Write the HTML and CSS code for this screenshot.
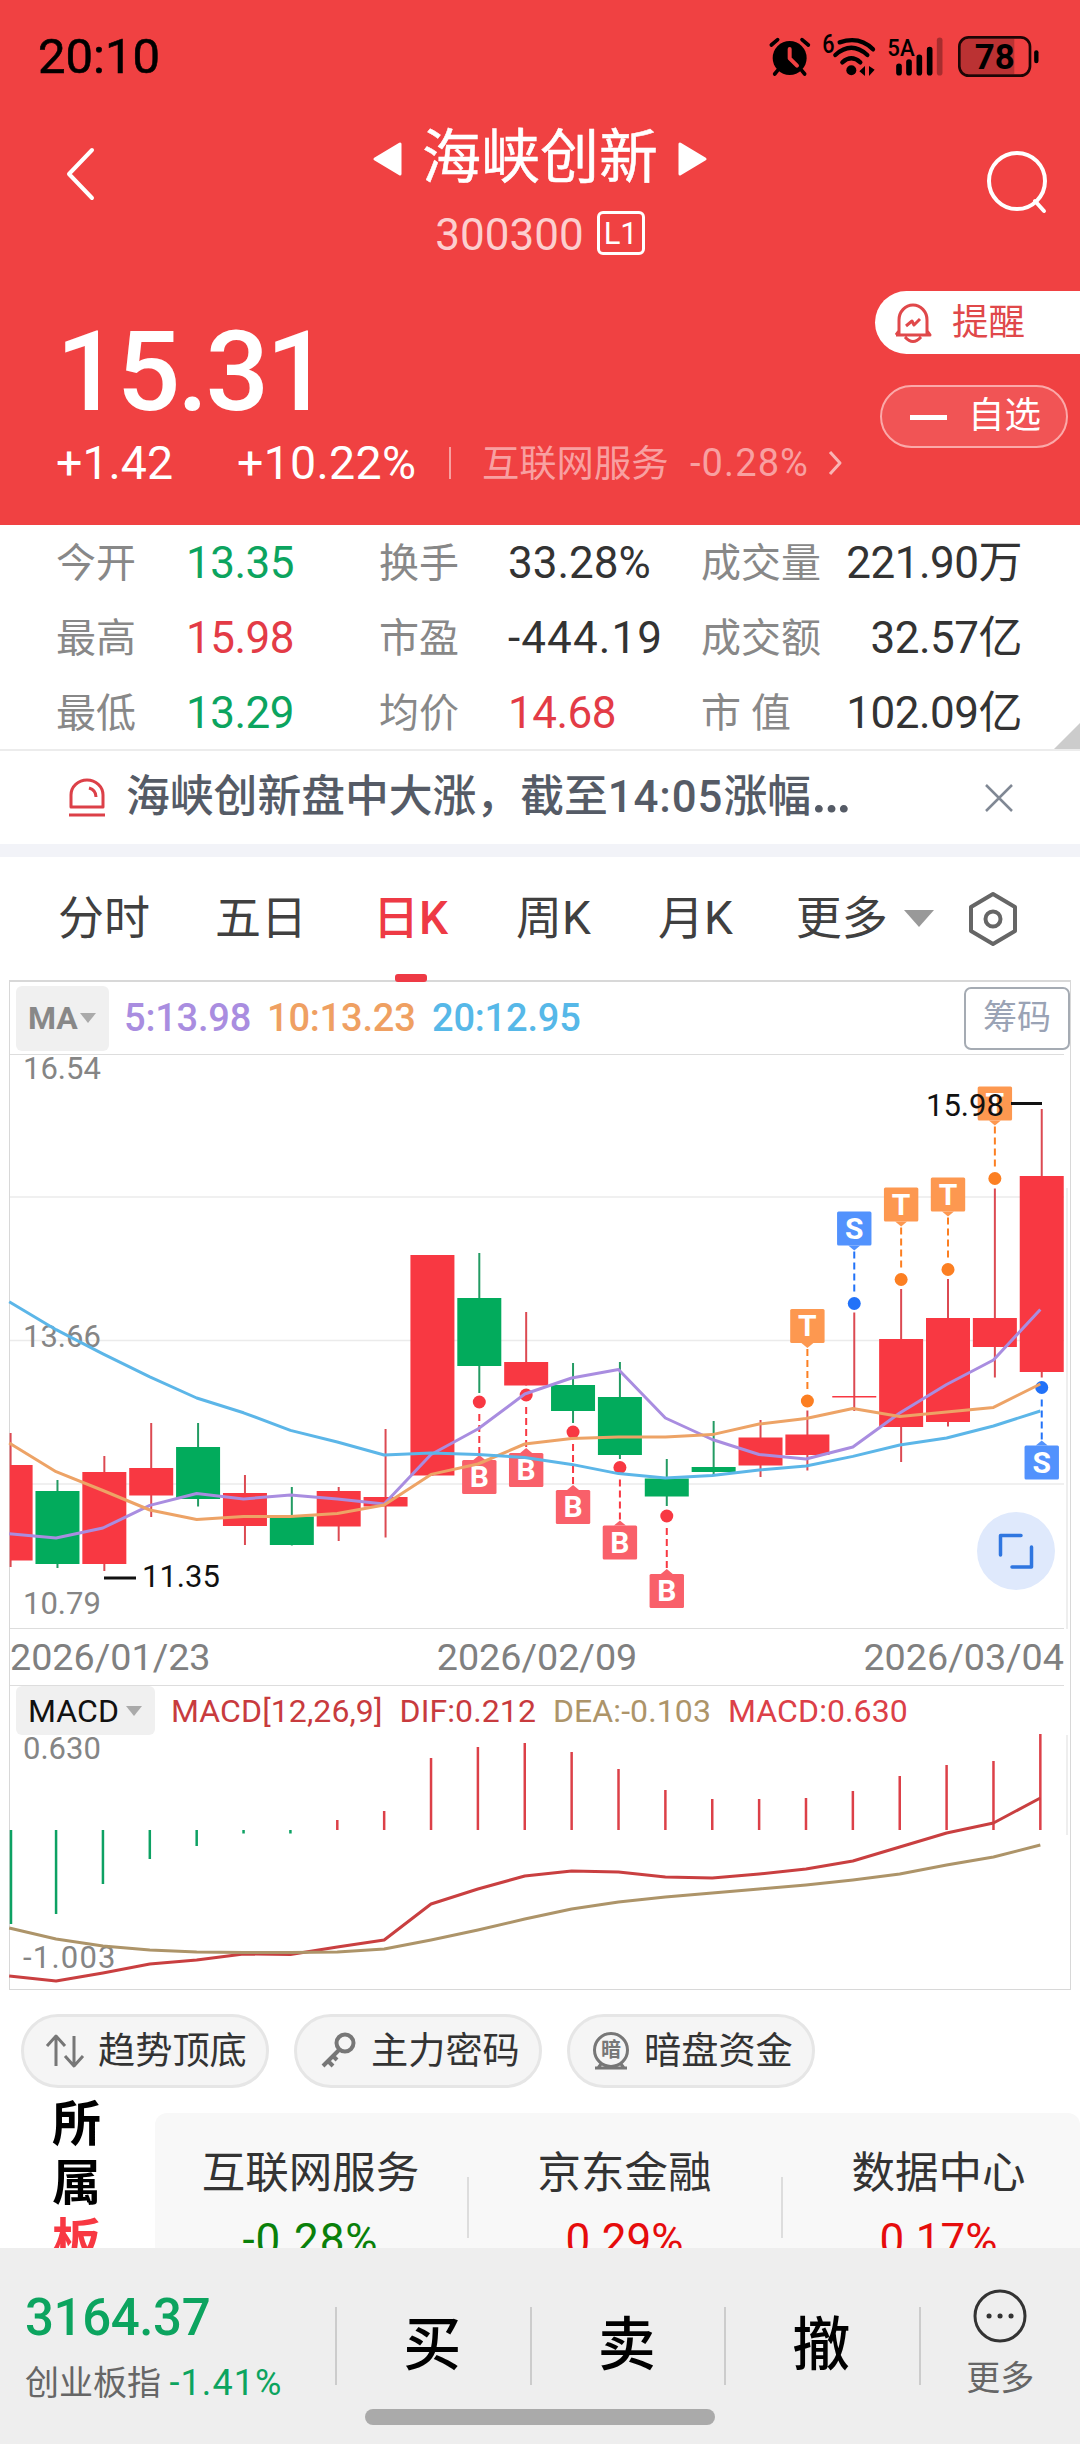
FILE: index.html
```html
<!DOCTYPE html>
<html lang="zh-CN">
	<head>
		<meta charset="UTF-8" />
		<meta name="viewport" content="width=device-width, initial-scale=1.0" />
		<title>海峡创新 300300</title>
		<link rel="stylesheet" href="styles.css">
	</head>
	<body>
		<header class="header">
			<div class="status-bar">
				<span class="status-time">20:10</span>
				<svg class="status-icons" viewBox="80 40 820 135">
					<!-- alarm -->
					<circle cx="148" cy="115" r="51" />
					<path class="st-line" d="M93 76l19-16M204 76l-19-16M112 152l-9 11M184 152l9 11" stroke-width="11" />
					<path d="M148 88v28l22 22" fill="none" stroke="#f04142" stroke-width="12" stroke-linecap="round" />
					<!-- wifi -->
					<text x="246" y="101" font-size="76" textLength="37" lengthAdjust="spacingAndGlyphs">6</text>
					<path class="st-line" d="M298 68q60-20 100 21M285 106q48-43 96 0M306 128q27-24 54 0" stroke-width="13" />
					<circle cx="333" cy="152" r="15" />
					<path d="M374 139v30l-17-14zM386 139v30l17-19z" />
					<!-- signal -->
					<text x="441" y="108" font-size="74" textLength="82" lengthAdjust="spacingAndGlyphs">5A</text>
					<path class="st-line" d="M476 140v19M506 127v32M537 113v46M568 90v69" stroke-width="17" />
					<path class="st-line" d="M598 62v97" stroke-width="17" opacity="0.3" />
					<!-- battery -->
					<path d="M680 58h142v105H680q-20 0-20-20V78q0-20 20-20z" opacity="0.22" />
					<rect x="657" y="53" width="212" height="115" rx="28" fill="none" stroke="#1d0505" stroke-width="8" />
					<path class="st-line" d="M888 98v26" stroke-width="13" />
					<text x="703" y="149" font-size="104" font-weight="700" textLength="120" lengthAdjust="spacingAndGlyphs">78</text>
				</svg>
			</div>
			<div class="nav">
				<svg class="back" viewBox="0 0 30 54"><path d="M27 3L4 27l23 24" /></svg>
				<div class="title">
					<div class="title-name">
						<svg viewBox="0 0 30 34"><path d="M28 2v30L3 17z" /></svg>
						<span>海峡创新</span>
						<svg viewBox="0 0 30 34"><path d="M2 2v30l25-15z" /></svg>
					</div>
					<div class="title-code">300300<span class="level">L1</span></div>
				</div>
				<svg class="search" viewBox="0 0 64 66"><circle cx="32" cy="31" r="28" /><path d="M50 51l9 10" /></svg>
			</div>
			<div class="quote">
				<div class="price">15.31</div>
				<div class="change">
					<span class="change-value">+1.42</span>
					<span class="change-percent">+10.22%</span>
					<span class="change-line"></span>
					<span class="sector">互联网服务</span>
					<span class="sector-percent">-0.28%</span>
					<svg viewBox="0 0 16 28"><path d="M3 3l10 11L3 25" /></svg>
				</div>
				<div class="pill remind">
					<svg viewBox="0 0 40 42"><path d="M6 32V18a14 15 0 0 1 28 0v14M3 33h34l-3-4M3 33l3-4M12 35q8 9 16 0M13 24l6-5 2 4 6-6" /></svg>
					提醒
				</div>
				<div class="pill favor"><i></i><span>自选</span></div>
			</div>
		</header>

		<section class="stats">
			<span class="label">今开</span><b class="green">13.35</b>
			<span class="label">换手</span><b class="percent">33.28%</b>
			<span class="label">成交量</span><b class="right">221.90万</b>
			<span class="label">最高</span><b class="red">15.98</b>
			<span class="label">市盈</span><b class="wide">-444.19</b>
			<span class="label">成交额</span><b class="right">32.57亿</b>
			<span class="label">最低</span><b class="green">13.29</b>
			<span class="label">均价</span><b class="red">14.68</b>
			<span class="label">市 值</span><b class="right">102.09亿</b>
		</section>

		<section class="alert">
			<svg class="alert-icon" viewBox="0 0 38 40"><path d="M3 29V17a16 15 0 0 1 32 0v12zM1 37h36M21 10q7 2 7 9" /></svg>
			<span class="alert-text">海峡创新盘中大涨，截至<span class="alert-time">14:05</span>涨幅<span class="dots">…</span></span>
			<svg class="alert-close" viewBox="0 0 30 30"><path d="M2 2l26 26M28 2L2 28" /></svg>
		</section>

		<nav class="tabs">
			<span>分时</span>
			<span>五日</span>
			<span class="active">日K</span>
			<span>周K</span>
			<span>月K</span>
			<span>更多</span>
			<i class="caret"></i>
			<svg viewBox="0 0 52 56"><path d="M26 3l22 13v24L26 53 4 40V16z" /><circle cx="26" cy="28" r="7.5" /></svg>
		</nav>

		<main class="chart">
			<div class="ma-row">
				<span class="chart-button ma-button">MA<i class="caret"></i></span>
				<span class="ma5">5:13.98</span>
				<span class="ma10">10:13.23</span>
				<span class="ma20">20:12.95</span>
				<span class="chip">筹码</span>
			</div>
			<svg id="kline" class="kline" viewBox="10 1054 1061 575"></svg>
			<div class="dates">
				<span>2026/01/23</span><span>2026/02/09</span><span>2026/03/04</span>
			</div>
			<div class="macd-row">
				<span class="chart-button macd-button">MACD<i class="caret"></i></span>
				<span class="dif">MACD[12,26,9]</span>
				<span class="dif">DIF:0.212</span>
				<span class="dea">DEA:-0.103</span>
				<span class="macd">MACD:0.630</span>
			</div>
			<svg id="macd" class="macd-chart" viewBox="10 1735 1061 255"></svg>
		</main>

		<section class="tools">
			<span class="tool">
				<svg viewBox="0 0 40 40"><path d="M11 35V6M2 15l9-10 9 10M29 5v29M20 25l9 10 9-10" /></svg>趋势顶底
			</span>
			<span class="tool">
				<svg class="key" viewBox="0 0 40 40"><circle cx="27" cy="12" r="8.5" /><path d="M21 19L5 35M10 30l5 5M15 25l4 4" /></svg>主力密码
			</span>
			<span class="tool">
				<svg viewBox="0 0 40 40"><circle cx="20" cy="19" r="16.5" /><path d="M4 37h32M10 33l-3 4M30 33l3 4" /><text x="10" y="26">暗</text></svg>暗盘资金
			</span>
		</section>

		<section class="boards">
			<div class="boards-title">所<br>属<br><span>板</span></div>
			<div class="boards-list">
				<div class="board"><span>互联网服务</span><em class="down">-0.28%</em></div>
				<div class="board"><span>京东金融</span><em>0.29%</em></div>
				<div class="board"><span>数据中心</span><em>0.17%</em></div>
			</div>
		</section>

		<footer class="footer">
			<div class="index">
				<div class="index-value">3164.37</div>
				<div class="index-name">创业板指 <span>-1.41%</span></div>
			</div>
			<div class="trade">买</div>
			<div class="trade">卖</div>
			<div class="trade">撤</div>
			<div class="more">
				<svg viewBox="0 0 56 56"><circle cx="28" cy="28" r="25" /><path d="M17 28h.1M28 28h.1M39 28h.1" /></svg>
				更多
			</div>
			<div class="home-bar"></div>
		</footer>

		<script>
			const RED = "#f83842";
			const GREEN = "#02ab5c";
			const STEP = 46.87;
			const kline = document.querySelector("#kline");
			const macd = document.querySelector("#macd");

			// body top, body bottom, high, low, up(1) / down(0)
			const candles = [
				[1465, 1560.5, 1433, 1567, 1], [1491, 1564, 1480, 1568, 0],
				[1472, 1564, 1456, 1571, 1], [1468, 1495.5, 1423, 1517, 1],
				[1447, 1499, 1423, 1506.5, 0], [1493, 1526, 1475, 1545, 1],
				[1516.5, 1545, 1487, 1545.5, 0], [1491, 1526.5, 1487, 1541, 1],
				[1497, 1506.5, 1429, 1537.5, 1], [1255, 1475.5, 1255, 1475.5, 1],
				[1298, 1366, 1253, 1393, 0], [1362, 1385.5, 1312, 1385.5, 1],
				[1385, 1411, 1363, 1423, 0], [1397, 1455, 1362, 1459, 0],
				[1478.5, 1496.5, 1459, 1506, 0], [1467, 1472, 1421, 1474.5, 0],
				[1437.5, 1465.5, 1420, 1477, 1], [1434.5, 1455, 1410.5, 1470.5, 1],
				[1396, 1397.5, 1312.5, 1411, 1], [1339, 1427, 1289, 1462, 1],
				[1318, 1422, 1279, 1426.5, 1], [1318, 1347, 1188.5, 1377.5, 1],
				[1176, 1372, 1109, 1377.5, 1],
			];
			const ma5 = [1533.7, 1538, 1528, 1505.4, 1493.5, 1499, 1495, 1499, 1504, 1454.5, 1429, 1394, 1378, 1369.5, 1418, 1439.5, 1454.5, 1459, 1447, 1413, 1384.5, 1360, 1309.5];
			const ma10 = [1443, 1471.7, 1490.5, 1510, 1519.5, 1516.5, 1516.5, 1513.4, 1505, 1474.4, 1464, 1444, 1438.4, 1437, 1437, 1434.6, 1424, 1418.5, 1408.5, 1416.6, 1412, 1407.4, 1384];
			const ma20 = [1301.8, 1329.7, 1353.8, 1376.8, 1398, 1412.8, 1430.4, 1442, 1455, 1453, 1454.5, 1457.5, 1464.4, 1473.6, 1478, 1475.5, 1470, 1466, 1456.4, 1445, 1438, 1426, 1411];
			// candle, letter, dot y, badge side
			const signals = [
				[10, "B", 1402, 1], [11, "B", 1395, 1], [12, "B", 1432, 1],
				[13, "B", 1467.5, 1], [14, "B", 1516, 1], [17, "T", 1401, -1],
				[18, "S", 1303.5, -1], [19, "T", 1279.5, -1], [20, "T", 1269.5, -1],
				[21, "T", 1178.5, -1], [22, "S", 1387.5, 1],
			];
			const signalColors = {
				B: ["#f83842", "#f9606a"],
				T: ["#fc7f22", "#fd9850"],
				S: ["#2272f8", "#5292fd"],
			};
			const bars = [1924, 1914, 1884, 1859, 1846, 1833.5, 1833.5, 1820, 1811, 1758, 1747, 1743, 1752, 1769, 1790, 1799, 1799, 1798, 1791, 1776, 1765, 1761, 1734];
			const dif = [1976, 1981, 1973, 1964, 1960, 1954, 1954.5, 1947, 1940, 1904, 1889, 1876, 1871, 1872, 1877, 1878, 1874, 1869, 1861, 1847, 1833, 1823, 1798];
			const dea = [1928, 1939, 1946, 1950, 1952, 1952.5, 1952.5, 1952, 1949, 1940, 1930, 1919, 1909, 1902, 1897, 1893, 1889, 1885, 1880, 1874, 1865, 1857, 1845];

			function line(values, color, start) {
				const points = values.map((y, i) => `${start + i * STEP},${y}`).join(" ");
				return `<polyline points="${points}" fill="none" stroke="${color}" stroke-width="3" stroke-linejoin="round" />`;
			}

			function renderKline() {
				let html = "";
				[1197, 1340.5, 1484].forEach((y) => {
					html += `<path d="M10 ${y}H1064" stroke="#ebebeb" stroke-width="1.5" />`;
				});
				html += `<path d="M10 1054.5H1064M10 1628.5H1064" stroke="#ddd" />`;
				html += `<path d="M1067 1188V1629" stroke="#eee" stroke-width="2" />`;
				[["16.54", 1079], ["13.66", 1346.5], ["10.79", 1614]].forEach(([text, y]) => {
					html += `<text class="axis" x="23" y="${y}">${text}</text>`;
				});
				candles.forEach(([top, bottom, high, low, up], i) => {
					const x = 10.6 + i * STEP;
					const left = Math.max(10, x - 22);
					const color = up ? RED : GREEN;
					html += `<path d="M${x} ${high}V${low}" stroke="${up ? "#dc4a52" : "#239b63"}" stroke-width="2" />`;
					html += `<rect x="${left}" y="${top}" width="${x + 22 - left}" height="${bottom - top}" fill="${color}" />`;
				});
				signals.forEach(([i, letter, y, side]) => {
					const x = 10.6 + i * STEP;
					const [dot, badge] = signalColors[letter];
					const top = side > 0 ? y + 58 : y - 92;
					const edge = side > 0 ? top : top + 34;
					html += `<path d="M${x} ${y + side * 12}V${edge - side * 6}" stroke="${dot}" stroke-width="2" stroke-dasharray="7 4" />`;
					html += `<circle cx="${x}" cy="${y}" r="6.5" fill="${dot}" />`;
					html += `<rect x="${x - 17.2}" y="${top}" width="34.4" height="34" rx="1.5" fill="${badge}" />`;
					html += `<path d="M${x - 6} ${edge}l6 ${-side * 5}l6 ${side * 5}z" fill="${badge}" />`;
					html += `<text class="signal" x="${x}" y="${top + 27}">${letter}</text>`;
				});
				html += line(ma5, "#a98de0", 9.2);
				html += line(ma10, "#eda366", 9.2);
				html += line(ma20, "#5cb6e8", 9.2);
				html += `<path d="M104 1578H136M1011 1103.5H1042" stroke="#111" stroke-width="3" />`;
				html += `<text class="mark" x="142" y="1587">11.35</text>`;
				html += `<text class="mark" x="926" y="1116">15.98</text>`;
				html += `<circle cx="1016" cy="1551" r="39" fill="#dfe9fc" />`;
				html += `<path d="M1021 1535.5H1000.5V1555M1031.5 1547V1567H1012" fill="none" stroke="#2f76e0" stroke-width="3.5" stroke-linecap="round" />`;
				kline.innerHTML = html;
			}

			function renderMacd() {
				let html = `<path d="M1067 1735V1835" stroke="#eee" stroke-width="2" />`;
				html += `<text class="axis" x="23" y="1759">0.630</text>`;
				html += `<text class="axis low" x="23" y="1968">-1.003</text>`;
				bars.forEach((y, i) => {
					const x = i === 0 ? 11 : 9.2 + i * STEP;
					html += `<path d="M${x} 1830V${y}" stroke="${y > 1830 ? "#0da163" : "#dc4048"}" stroke-width="2.5" />`;
				});
				html += line(dif, "#c93f40", 9.2);
				html += line(dea, "#ad9469", 9.2);
				macd.innerHTML = html;
			}

			renderKline();
			renderMacd();
		</script>
	</body>
</html>
```
FILE: styles.css
```css
* {
	padding: 0;
	margin: 0;
	box-sizing: border-box;
}
body {
	width: 1080px;
	height: 2444px;
	overflow: hidden;
	position: relative;
	background: #fff;
	color: #333;
	font-family: Roboto, "Noto Sans CJK SC", sans-serif;
}
svg {
	display: block;
	flex: none;
	overflow: visible;
}
svg path,
svg circle {
	stroke-linejoin: round;
}
i,
em {
	font-style: normal;
}
.green {
	color: #0ca45f;
}
.red {
	color: #e33b46;
}

/* header */
.header {
	height: 525px;
	background: #f04142;
	color: #fff;
}
.status-bar {
	height: 112px;
	display: flex;
	justify-content: space-between;
	padding: 33px 40px 0 38px;
	color: #000;
}
.status-time {
	font-size: 49px;
	line-height: 48px;
	font-weight: 400;
	-webkit-text-stroke: 0.6px #000;
}
.status-icons {
	width: 273.33px;
	height: 45px;
	font-weight: 500;
}
.st-line {
	fill: none;
	stroke: #000;
	stroke-linecap: round;
}
.nav {
	height: 168px;
	display: flex;
	justify-content: space-between;
	padding: 0 31px 0 65px;
}
.nav .back,
.nav .search {
	fill: none;
	stroke: #fff;
	stroke-width: 4;
	stroke-linecap: round;
}
.back {
	width: 30px;
	height: 54px;
	margin-top: 35px;
}
.search {
	width: 64px;
	height: 66px;
	margin-top: 38px;
}
.title {
	width: 360px;
}
.title-name {
	height: 88px;
	display: flex;
	justify-content: center;
	align-items: center;
	gap: 20px;
	padding-top: 4px;
	font-size: 59px;
	line-height: 88px;
	font-weight: 400;
	-webkit-text-stroke: 0.5px #fff;
}
.title-name svg {
	width: 30px;
	height: 34px;
	margin-top: 1px;
	fill: #fff;
	stroke: #fff;
	stroke-width: 3;
}
.title-code {
	display: flex;
	justify-content: center;
	align-items: center;
	gap: 13px;
	height: 69px;
	color: #fccfcf;
	font-size: 44px;
}
.level {
	width: 48px;
	height: 44px;
	margin-top: -4px;
	border: 3px solid #fff;
	border-radius: 6px;
	color: #fff;
	font-size: 31px;
	line-height: 40px;
	text-align: center;
}
.quote {
	position: relative;
	padding-left: 56px;
}
.price {
	height: 155px;
	padding: 25px 0 0 0;
	font-size: 112px;
	line-height: 134px;
	font-weight: 500;
	letter-spacing: -3px;
}
.change {
	height: 56px;
	display: flex;
	align-items: center;
	font-size: 46.5px;
	line-height: 56px;
}
.change-value {
	width: 181px;
}
.change-percent {
	width: 212px;
	letter-spacing: 0.3px;
}
.change-line {
	width: 2px;
	height: 32px;
	background: #f7a0a0;
}
.sector {
	width: 208px;
	margin-left: 31px;
	padding-top: 2px;
	color: #f8a0a1;
	font-size: 37.3px;
}
.sector-percent {
	width: 137px;
	color: #f8a0a1;
	font-size: 38px;
	letter-spacing: 1.1px;
}
.change svg {
	width: 16px;
	height: 28px;
	fill: none;
	stroke: #f9b4b4;
	stroke-width: 3;
}
.pill {
	position: absolute;
	height: 63px;
	display: flex;
	align-items: center;
	font-size: 36.5px;
	line-height: 54px;
}
.remind {
	top: 11px;
	right: 0;
	width: 205px;
	padding-left: 18px;
	gap: 19px;
	border-radius: 32px 0 0 32px;
	background: #fff;
	color: #e0484a;
}
.remind svg {
	width: 40px;
	height: 42px;
	fill: none;
	stroke: #e0484a;
	stroke-width: 3;
}
.favor {
	top: 105px;
	right: 12px;
	width: 188px;
	padding-left: 28px;
	gap: 21px;
	border: 2px solid #fba9a9;
	border-radius: 32px;
	background: #f15455;
}
.favor span {
	margin-top: -2px;
}
.favor i {
	width: 37px;
	height: 5px;
	margin-top: 2px;
	background: #fff;
}

/* stats */
.stats {
	position: relative;
	height: 226px;
	display: grid;
	grid-template-columns: 130px 193px 129px 193px 130px 191px;
	grid-auto-rows: 75px;
	padding-left: 56px;
	border-bottom: 2px solid #ececec;
	line-height: 77px;
}
.stats .label {
	color: #888;
	font-size: 40px;
}
.stats b {
	font-size: 44px;
	font-weight: 400;
	letter-spacing: -0.5px;
	white-space: nowrap;
}
.stats .percent {
	letter-spacing: 0;
}
.stats .wide {
	letter-spacing: 1.1px;
}
.stats .right {
	justify-self: end;
}
.stats::after {
	content: "";
	position: absolute;
	right: 0;
	bottom: 0;
	border-left: 26px solid transparent;
	border-bottom: 26px solid #ccc;
}

/* alert */
.alert {
	height: 106px;
	display: flex;
	align-items: center;
	padding: 0 66px 0 68px;
	border-bottom: 13px solid #f2f3f8;
}
.alert-icon {
	width: 38px;
	height: 40px;
	margin-right: 20px;
	fill: none;
	stroke: #dc4048;
	stroke-width: 3;
}
.alert-text {
	flex: 1;
	height: 93px;
	color: #555b66;
	font-size: 43.8px;
	font-weight: 500;
	line-height: 93px;
}
.alert-time {
	letter-spacing: 0.9px;
}
.dots {
	font-size: 57px;
	line-height: 1;
}
.alert-close {
	width: 30px;
	height: 30px;
	fill: none;
	stroke: #808894;
	stroke-width: 2.5;
}

/* tabs */
.tabs {
	height: 123px;
	display: flex;
	align-items: center;
	padding-left: 58px;
	color: #404040;
	font-size: 46px;
}
.tabs span {
	position: relative;
	line-height: 123px;
	margin-right: 67px;
}
.tabs span:nth-of-type(1) {
	margin-right: 65px;
}
.tabs span:nth-of-type(2) {
	margin-right: 66px;
}
.tabs span:nth-of-type(3) {
	margin-right: 68px;
}
.tabs span:nth-of-type(5) {
	margin-right: 63px;
}
.tabs span:nth-of-type(6) {
	margin-right: 16px;
}
.tabs .active {
	color: #ee3a45;
	font-weight: 500;
}
.tabs .active::after {
	content: "";
	position: absolute;
	left: 22px;
	bottom: -2px;
	width: 32px;
	height: 8px;
	border-radius: 3px;
	background: #ee3a45;
}
.caret {
	border: 8px solid transparent;
	border-top: 10px solid #aaa;
	border-bottom: 0;
}
.tabs .caret {
	border-width: 17px 15px 0;
	border-top-color: #999;
	margin-right: 33px;
}
.tabs svg {
	width: 52px;
	height: 56px;
	fill: none;
	stroke: #666;
	stroke-width: 4;
}

/* charts */
.chart {
	width: 1062px;
	height: 1010px;
	margin-left: 9px;
	border: 1px solid #d8d8d8;
	border-top-width: 2px;
}
.ma-row {
	height: 72px;
	display: flex;
	align-items: center;
	padding: 0 0 0 6px;
	font-size: 38px;
	font-weight: 500;
}
.chart-button {
	display: flex;
	align-items: center;
	justify-content: space-between;
	padding: 0 13px 0 12px;
	border-radius: 6px;
	background: #f0f0f0;
}
.ma-button {
	width: 93px;
	height: 65px;
	margin-right: 15px;
	color: #888;
	font-size: 32px;
	font-weight: 700;
}
.ma5 {
	width: 143px;
	color: #a98de0;
	letter-spacing: -0.2px;
}
.ma10 {
	width: 165px;
	color: #efa062;
	letter-spacing: -0.2px;
}
.ma20 {
	flex: 1;
	color: #56b8e8;
	letter-spacing: -0.2px;
}
.chip {
	width: 106px;
	height: 63px;
	border: 2px solid #a5abb3;
	border-radius: 7px;
	color: #9aa3b5;
	font-size: 34px;
	font-weight: 400;
	line-height: 56px;
	text-align: center;
}
.kline {
	width: 1061px;
	height: 575px;
}
.axis {
	fill: #858585;
	font-size: 31px;
}
.axis.low {
	letter-spacing: 1.2px;
}
.mark {
	fill: #111;
	font-size: 31px;
}
.signal {
	fill: #fff;
	font-size: 30px;
	font-weight: 700;
	text-anchor: middle;
}
.dates {
	width: 1054px;
	height: 57px;
	display: flex;
	justify-content: space-between;
	align-items: center;
	border-bottom: 1px solid #ddd;
	color: #808080;
	font-size: 37.7px;
}
.macd-row {
	height: 49px;
	display: flex;
	align-items: center;
	padding-left: 6px;
	font-size: 32px;
	letter-spacing: 0.1px;
}
.macd-row > span + span {
	margin-right: 17px;
}
.macd-button {
	width: 139px;
	height: 49px;
	margin-right: 16px;
	color: #111;
	font-size: 32px;
	font-weight: 400;
}
.dif {
	color: #c83b3e;
}
.dea {
	color: #ad9469;
}
.macd {
	color: #dc4048;
}
.macd-chart {
	width: 1061px;
	height: 255px;
}

/* tools */
.tools {
	display: flex;
	gap: 25px;
	padding: 24px 0 0 21px;
}
.tool {
	width: 248px;
	height: 74px;
	display: flex;
	align-items: center;
	gap: 13px;
	padding-left: 21px;
	border: 3px solid #e6e6e6;
	border-radius: 37px;
	background: #f5f5f5;
	font-size: 37.2px;
	line-height: 64px;
	white-space: nowrap;
}
.tool svg {
	width: 40px;
	height: 40px;
	fill: none;
	stroke: #777;
	stroke-width: 3;
}
.tool .key {
	stroke-width: 4;
}
.tool text {
	fill: #777;
	stroke: none;
	font-size: 20px;
	font-weight: 700;
}

/* boards */
.boards {
	display: flex;
	padding-top: 6px;
}
.boards-title {
	width: 155px;
	padding: 1px 0 0 52px;
	color: #000;
	font-size: 49px;
	font-weight: 700;
	line-height: 59px;
}
.boards-title span {
	color: #f83842;
}
.boards-list {
	width: 925px;
	height: 180px;
	margin-top: 19px;
	display: flex;
	border-radius: 12px;
	background: #f8f8f8;
	overflow: hidden;
}
.board {
	position: relative;
	flex: none;
	width: 314px;
	padding: 31px 3px 0 0;
	text-align: center;
	font-size: 43.5px;
	line-height: 60px;
}
.board + .board::before {
	content: "";
	position: absolute;
	left: -2px;
	top: 64px;
	width: 2px;
	height: 61px;
	background: #ddd;
}
.board em {
	display: block;
	margin-top: 6px;
	color: #e60c0c;
	font-size: 44px;
}
.board .down {
	color: #0a800a;
	letter-spacing: 1px;
}

/* footer */
.footer {
	position: absolute;
	left: 0;
	bottom: 0;
	width: 1080px;
	height: 196px;
	display: flex;
	background: #eee;
}
.index {
	width: 335px;
	padding: 41px 0 0 25px;
}
.index-value {
	color: #0ca45f;
	font-size: 51px;
	line-height: 58px;
	font-weight: 500;
	letter-spacing: -0.4px;
}
.index-name {
	margin-top: 10px;
	color: #666;
	font-size: 34px;
	line-height: 52px;
}
.index-name span {
	color: #0ca45f;
	font-size: 36px;
	letter-spacing: 1.1px;
}
.trade {
	width: 194.5px;
	height: 78px;
	margin-top: 59px;
	border-left: 2px solid #ccc;
	padding-right: 2px;
	color: #000;
	font-size: 58px;
	font-weight: 500;
	line-height: 76px;
	text-align: center;
}
.more {
	flex: 1;
	height: 78px;
	margin-top: 59px;
	border-left: 2px solid #ccc;
	color: #666;
	font-size: 34px;
	line-height: 68px;
	text-align: center;
}
.more svg {
	width: 56px;
	height: 56px;
	margin: -19px auto 0;
	fill: none;
	stroke: #333;
	stroke-width: 3;
}
.more path {
	stroke-width: 5;
	stroke-linecap: round;
}
.home-bar {
	position: absolute;
	left: 365px;
	bottom: 19px;
	width: 350px;
	height: 16px;
	border-radius: 8px;
	background: #aaa;
}
```
